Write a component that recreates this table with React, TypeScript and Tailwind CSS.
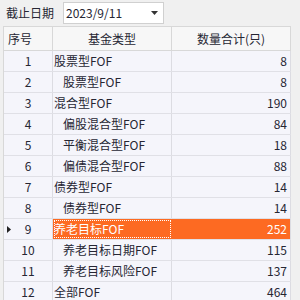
import React from "react";

const rows: { n: number; name: string; level: number; v: number }[] = [
  { n: 1, name: "股票型FOF", level: 0, v: 8 },
  { n: 2, name: "股票型FOF", level: 1, v: 8 },
  { n: 3, name: "混合型FOF", level: 0, v: 190 },
  { n: 4, name: "偏股混合型FOF", level: 1, v: 84 },
  { n: 5, name: "平衡混合型FOF", level: 1, v: 18 },
  { n: 6, name: "偏债混合型FOF", level: 1, v: 88 },
  { n: 7, name: "债券型FOF", level: 0, v: 14 },
  { n: 8, name: "债券型FOF", level: 1, v: 14 },
  { n: 9, name: "养老目标FOF", level: 0, v: 252 },
  { n: 10, name: "养老目标日期FOF", level: 1, v: 115 },
  { n: 11, name: "养老目标风险FOF", level: 1, v: 137 },
  { n: 12, name: "全部FOF", level: 0, v: 464 },
];

export default function App() {
  return (
    <div
      className="w-[300px] h-[300px] overflow-hidden bg-[#f0f0f0] text-[12px] text-[#262633]"
      style={{ fontFamily: '"Noto Sans CJK SC", "Noto Sans", sans-serif' }}
    >
      <div className="h-[26px] flex items-center">
        <span className="ml-[6px] leading-none">截止日期</span>
        <div className="ml-[9px] w-[101px] h-[22px] bg-white border border-[#d0d0d0] flex items-center justify-between pl-[2px] pr-[5px]">
          <span className="leading-none">2023/9/11</span>
          <svg width="7" height="4" viewBox="0 0 7 4">
            <path d="M0 0 L7 0 L3.5 4 Z" fill="#333" />
          </svg>
        </div>
      </div>
      <div className="ml-[3px] border-l border-t border-[#d8d8d8] w-[288px]">
        <div className="flex h-[24px] bg-[#f7f7f7] border-b border-[#d8d8d8]">
          <div className="w-[49px] border-r border-[#d8d8d8] flex items-center pl-[4px]">序号</div>
          <div className="w-[119px] border-r border-[#d8d8d8] flex items-center justify-center">基金类型</div>
          <div className="w-[119px] border-r border-[#d8d8d8] flex items-center justify-center">数量合计(只)</div>
        </div>
        {rows.map((r) => {
          const sel = r.n === 9;
          return (
            <div
              key={r.n}
              className={
                "flex h-[21px] border-b border-[#e0e0e6] " +
                (sel ? "" : "bg-[#f5f5fb]")
              }
            >
              <div className="relative w-[49px] border-r border-[#dcdce2] bg-[#f5f5fb] flex items-center justify-center">
                {sel && (
                  <svg className="absolute left-[3px] top-[7px]" width="4" height="7" viewBox="0 0 4 7">
                    <path d="M0 0 L4 3.5 L0 7 Z" fill="#222" />
                  </svg>
                )}
                <span className="leading-none">{r.n}</span>
              </div>
              <div
                className={
                  "w-[119px] border-r flex items-center whitespace-nowrap overflow-visible relative z-10 " +
                  (sel
                    ? "bg-[#fd6a22] text-white border-[#fd6a22] outline-1 outline-dotted outline-white -outline-offset-2"
                    : "border-[#dcdce2]") +
                  (r.level ? " pl-[10px]" : " pl-[1px]")
                }
              >
                <span className="leading-none">{r.name}</span>
              </div>
              <div
                className={
                  "w-[119px] border-r flex items-center justify-end pr-[3px] " +
                  (sel ? "bg-[#fd6a22] text-white border-[#dcdce2]" : "border-[#dcdce2]")
                }
              >
                <span className="leading-none">{r.v}</span>
              </div>
            </div>
          );
        })}
      </div>
    </div>
  );
}
